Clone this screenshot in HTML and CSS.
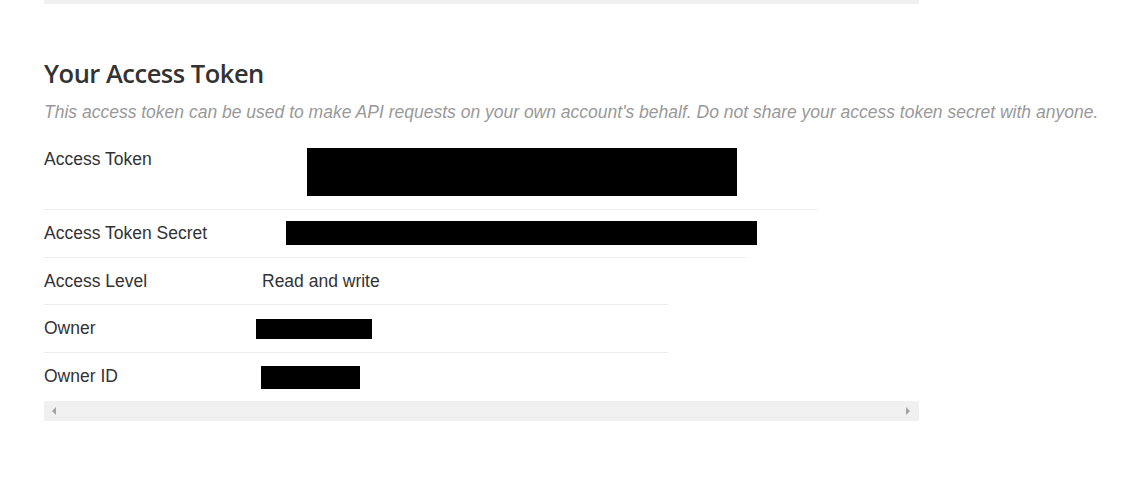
FILE: index.html
```html
<!DOCTYPE html>
<html>
<head>
<meta charset="utf-8">
<link rel="stylesheet" href="styles.css">
</head>
<body>
<div class="page">
  <div class="topbar"></div>
  <h2 class="title">Your Access Token</h2>
  <p class="subtitle">This access token can be used to make API requests on your own account's behalf. Do not share your access token secret with anyone.</p>
  <div class="table">
    <div class="row row-token">
      <div class="label">Access Token</div>
      <div class="value"><span class="redact redact-token"></span></div>
    </div>
    <div class="row row-secret">
      <div class="label">Access Token Secret</div>
      <div class="value"><span class="redact redact-secret"></span></div>
    </div>
    <div class="row row-short">
      <div class="label">Access Level</div>
      <div class="value value-text">Read and write</div>
    </div>
    <div class="row row-short row-tall">
      <div class="label">Owner</div>
      <div class="value"><span class="redact redact-owner"></span></div>
    </div>
    <div class="row row-short row-tall row-last">
      <div class="label">Owner ID</div>
      <div class="value"><span class="redact redact-ownerid"></span></div>
    </div>
    <div class="scrollbar">
      <span class="arrow arrow-left"></span>
      <span class="arrow arrow-right"></span>
    </div>
  </div>
</div>
</body>
</html>
```
FILE: styles.css
```css
html, body {
  margin: 0;
  padding: 0;
  background: #ffffff;
}
.page {
  padding-left: 44px;
  font-family: "Liberation Sans", Arial, sans-serif;
  color: #333333;
}
.topbar {
  width: 875px;
  height: 4px;
  background: #f0f0f0;
}
.title {
  margin: 53px 0 0 0;
  font-family: "Open Sans", sans-serif;
  font-weight: 600;
  font-size: 25.5px;
  line-height: 32px;
  color: #333333;
  letter-spacing: -0.5px;
}
.subtitle {
  margin: 11px 0 0 0;
  font-style: italic;
  font-size: 17.5px;
  line-height: 24px;
  color: #999999;
  white-space: nowrap;
}
.table {
  margin-top: 11px;
  width: 875px;
}
.row {
  display: flex;
  align-items: flex-start;
  border-bottom: 1px solid #eeeeee;
  box-sizing: border-box;
}
.label {
  font-size: 17.5px;
  line-height: 24px;
  flex: none;
}
.row-token {
  width: 774px;
  height: 75px;
  padding-top: 12px;
}
.row-token .label { width: 263px; }
.row-token .value { padding-top: 1px; }
.redact {
  display: block;
  background: #000000;
}
.redact-token { width: 430px; height: 48px; }
.row-secret {
  width: 703px;
  height: 48px;
  padding-top: 11px;
}
.row-secret .label { width: 242px; }
.row-secret .value { padding-top: 0px; }
.redact-secret { width: 471px; height: 24px; }
.row-short {
  width: 624px;
  height: 47px;
  padding-top: 11px;
}
.row-tall {
  height: 48px;
}
.row-short .label { width: 212px; }
.value-text {
  font-size: 17.5px;
  line-height: 24px;
  margin-left: 6px;
}
.redact-owner { width: 116px; height: 20px; margin-top: 3px; }
.row-last .value { margin-left: 5px; }
.redact-ownerid { width: 99px; height: 23px; margin-top: 2px; }
.row-last {
  border-bottom: 1px solid #ffffff;
}
.scrollbar {
  position: relative;
  width: 875px;
  height: 20px;
  background: #f0f0f0;
}
.arrow {
  position: absolute;
  top: 6px;
  width: 0;
  height: 0;
  border-top: 4px solid transparent;
  border-bottom: 4px solid transparent;
}
.arrow-left {
  left: 8px;
  border-right: 4px solid #a3a3a3;
}
.arrow-right {
  right: 9px;
  border-left: 4px solid #a3a3a3;
}
```
